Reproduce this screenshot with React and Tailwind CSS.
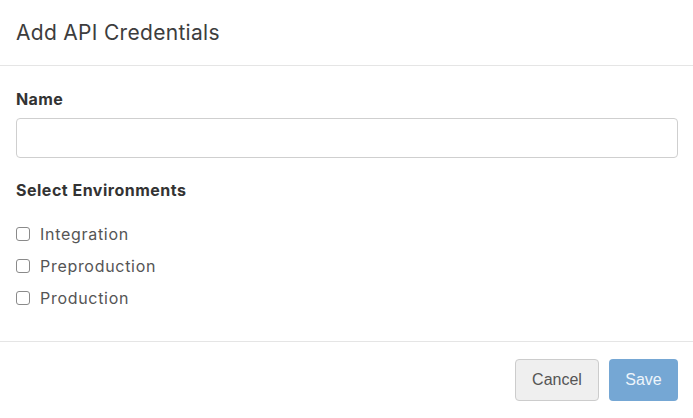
export default function App() {
  const envs = ["Integration", "Preproduction", "Production"];
  return (
    <div className="w-[693px] h-[418px] bg-white flex flex-col text-[#3a3a3a]" style={{ fontFamily: "Inter, 'Noto Sans', sans-serif" }}>
      <div className="h-[66px] border-b border-[#e5e5e5] flex items-center px-4">
        <h1 className="text-[21px] font-normal text-[#3d3d3d] tracking-[0.3px] pt-[1px]">Add API Credentials</h1>
      </div>
      <div className="flex-1 px-4 pt-[23px] border-b border-[#e5e5e5]">
        <div className="text-[16px] font-bold text-[#333] leading-[20px] tracking-[0.4px]">Name</div>
        <input className="block mt-[9px] w-[662px] h-[40px] border border-[#cfcfcf] rounded-[4px] outline-none px-3" />
        <div className="mt-[22px] text-[16px] font-bold text-[#333] leading-[20px] tracking-[0.5px]">Select Environments</div>
        <div className="mt-[18px] flex flex-col">
          {envs.map((e) => (
            <label key={e} className="flex items-center h-[32px]">
              <span className="w-[14px] h-[14px] border border-[#8a8a8a] rounded-[3px] bg-white mr-[10px]"></span>
              <span className="text-[16px] text-[#555] tracking-[0.7px]">{e}</span>
            </label>
          ))}
        </div>
      </div>
      <div className="h-[76px] flex items-center justify-end gap-[10px] px-[15px]" style={{ fontFamily: "'Liberation Sans', Arial, sans-serif" }}>
        <button className="w-[84px] h-[42px] rounded-[4px] border border-[#cccccc] bg-[#efefef] text-[16px] text-[#555]">Cancel</button>
        <button className="w-[69px] h-[42px] rounded-[4px] bg-[#75a7d4] text-[16px] text-[#eef5fb]">Save</button>
      </div>
    </div>
  );
}
